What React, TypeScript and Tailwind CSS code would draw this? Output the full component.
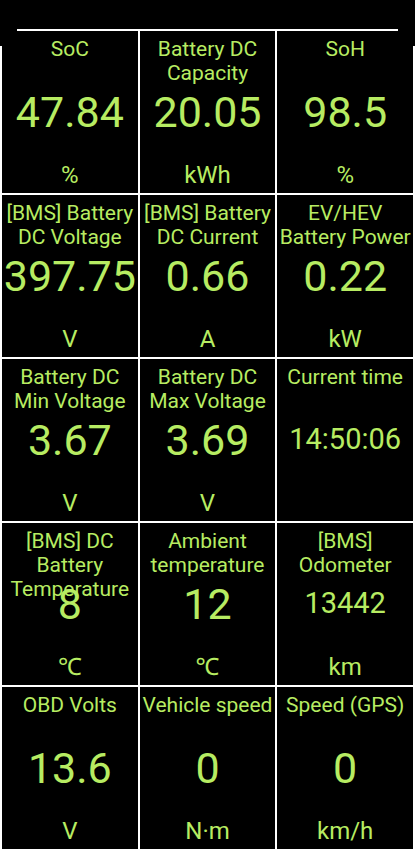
import React from "react";

type Gauge = {
  title: string[];
  value: string;
  unit: string;
  small?: boolean;
};

const gauges: Gauge[] = [
  { title: ["SoC"], value: "47.84", unit: "%" },
  { title: ["Battery DC", "Capacity"], value: "20.05", unit: "kWh" },
  { title: ["SoH"], value: "98.5", unit: "%" },
  { title: ["[BMS] Battery", "DC Voltage"], value: "397.75", unit: "V" },
  { title: ["[BMS] Battery", "DC Current"], value: "0.66", unit: "A" },
  { title: ["EV/HEV", "Battery Power"], value: "0.22", unit: "kW" },
  { title: ["Battery DC", "Min Voltage"], value: "3.67", unit: "V" },
  { title: ["Battery DC", "Max Voltage"], value: "3.69", unit: "V" },
  { title: ["Current time"], value: "14:50:06", unit: "", small: true },
  { title: ["[BMS] DC", "Battery", "Temperature"], value: "8", unit: "℃" },
  { title: ["Ambient", "temperature"], value: "12", unit: "℃" },
  { title: ["[BMS]", "Odometer"], value: "13442", unit: "km", small: true },
  { title: ["OBD Volts"], value: "13.6", unit: "V" },
  { title: ["Vehicle speed"], value: "0", unit: "N·m" },
  { title: ["Speed (GPS)"], value: "0", unit: "km/h" },
];

// one tile of the dashboard
const Tile: React.FC<{ g: Gauge }> = ({ g }) => (
  <div className="relative flex h-[162px] flex-col items-center bg-black text-[#b7ec62]">
    <div className="pt-[6px] text-center text-[21px] leading-[24px]">
      {g.title.map((line) => (
        <div key={line} className="whitespace-nowrap">
          {line}
        </div>
      ))}
    </div>

    {/* value sits dead centre and may overlap a long title */}
    <div
      className={`absolute inset-0 flex items-center justify-center whitespace-nowrap ${
        g.small ? "text-[29px]" : "text-[43px]"
      }`}
    >
      {g.value}
    </div>

    <div className="mt-auto h-[28px] pb-[4px] text-[24px] leading-[28px] box-content">{g.unit}</div>
  </div>
);

export default function App() {
  return (
    <div
      className="h-[851px] w-[415px] overflow-hidden bg-black pt-[29px]"
      style={{ fontFamily: "Roboto, 'Noto Sans', 'DejaVu Sans', sans-serif" }}
    >
      <div className="relative grid grid-cols-3 gap-[2px] bg-white p-[2px]">
        {gauges.map((g, i) => (
          <Tile key={i} g={g} />
        ))}

        {/* screen corners cut the frame off */}
        <div className="pointer-events-none absolute left-0 top-0 h-[17px] w-[17px] bg-black" />
        <div className="pointer-events-none absolute right-0 top-0 h-[17px] w-[17px] bg-black" />
      </div>
    </div>
  );
}
